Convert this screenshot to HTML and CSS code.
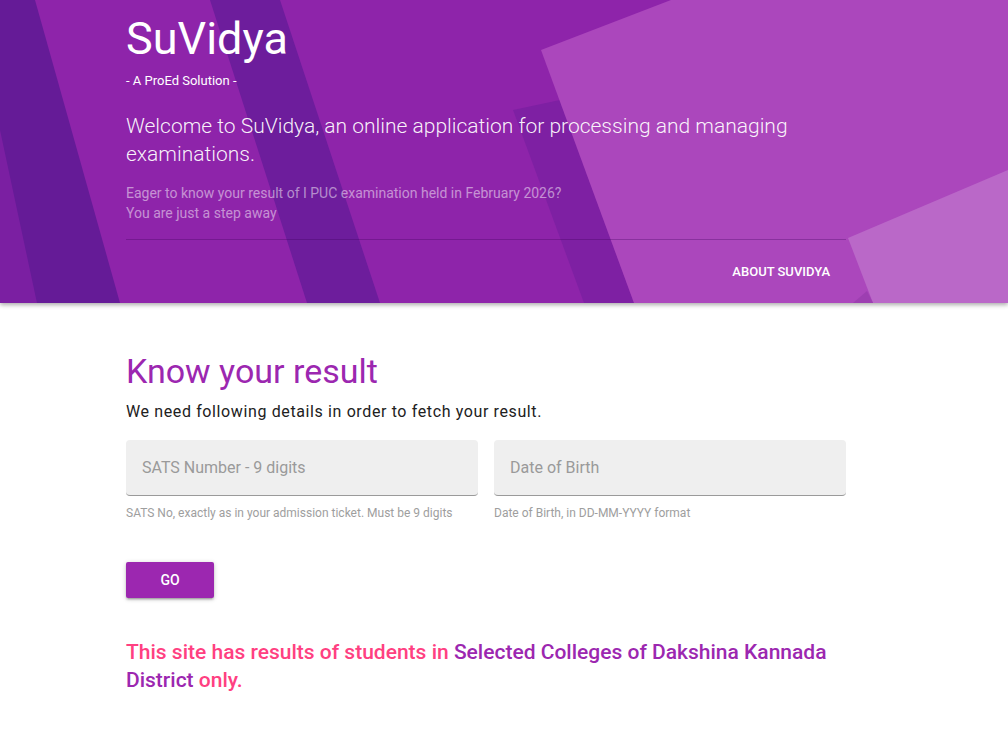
FILE: index.html
```html
<!DOCTYPE html>
<html lang="en">
<head>
<meta charset="utf-8">
<title>SuVidya - Know your result</title>
<link rel="stylesheet" href="styles.css">
</head>
<body>
<header class="hero">
  <svg class="hero-bg" viewBox="0 0 1008 303" preserveAspectRatio="none" aria-hidden="true">
    <rect width="1008" height="303" fill="#8e24aa"/>
    <polygon points="0,0 35,0 120,303 0,303" fill="#651b97"/>
    <polygon points="0,130 37,303 0,303" fill="#7b1fa2"/>
    <polygon points="210,0 280,0 380,303 307,303" fill="#6d1d9c"/>
    <polygon points="513,110 560,100 634,303 584,303" fill="#7e20a3"/>
    <polygon points="541,50 671,0 1008,0 1008,303 634,303" fill="#ab47bc"/>
    <polygon points="848,238 1008,170 1008,303 873,303" fill="#ba68c8"/>
    <polygon points="853,303 867,291 873,303" fill="#9d3fb1"/>
  </svg>
  <div class="hero-inner">
    <h1 class="brand">SuVidya</h1>
    <p class="tagline">- A ProEd Solution -</p>
    <p class="lead">Welcome to SuVidya, an online application for processing and managing examinations.</p>
    <p class="sub">Eager to know your result of I PUC examination held in February 2026?<br>You are just a step away</p>
    <nav class="hero-nav">
      <a class="nav-link" href="#">About SuVidya</a>
    </nav>
  </div>
</header>

<main class="content">
  <h2 class="title">Know your result</h2>
  <p class="intro">We need following details in order to fetch your result.</p>
  <form class="form">
    <div class="fields">
      <div class="field">
        <input class="input" type="text" placeholder="SATS Number - 9 digits">
        <div class="helper">SATS No, exactly as in your admission ticket. Must be 9 digits</div>
      </div>
      <div class="field">
        <input class="input" type="text" placeholder="Date of Birth">
        <div class="helper">Date of Birth, in DD-MM-YYYY format</div>
      </div>
    </div>
    <button class="btn" type="button">Go</button>
  </form>
  <p class="notice">This site has results of students in <strong class="hl">Selected Colleges of Dakshina Kannada District</strong> only.</p>
</main>
</body>
</html>
```

FILE: styles.css
```css
* { box-sizing: border-box; }

html, body {
  margin: 0;
  padding: 0;
  background: #ffffff;
  font-family: Roboto, "Noto Sans", "Liberation Sans", sans-serif;
  color: #212121;
}

.hero {
  position: relative;
  overflow: hidden;
  box-shadow: 0 2px 4px rgba(0, 0, 0, 0.25), 0 1px 6px rgba(0, 0, 0, 0.12);
}

.hero-bg {
  position: absolute;
  left: 0;
  top: 0;
  width: 100%;
  height: 100%;
  display: block;
}

.hero-inner {
  position: relative;
  margin-left: 126px;
  width: 720px;
  color: #ffffff;
}

.brand {
  margin: 0;
  padding-top: 11px;
  font-size: 45px;
  line-height: 56px;
  font-weight: 400;
}

.tagline {
  margin: 4px 0 0;
  font-size: 13px;
  line-height: 20px;
  font-weight: 400;
}

.lead {
  margin: 21px 0 0;
  font-size: 21px;
  line-height: 28px;
  font-weight: 300;
  color: rgba(255, 255, 255, 0.95);
}

.sub {
  margin: 15px 0 0;
  font-size: 14px;
  line-height: 20px;
  color: rgba(255, 255, 255, 0.5);
  padding-bottom: 16px;
  border-bottom: 1px solid rgba(60, 0, 90, 0.3);
}

.hero-nav {
  display: flex;
  justify-content: flex-end;
  align-items: center;
  height: 63px;
  padding-right: 16px;
}

.nav-link {
  color: #ffffff;
  text-decoration: none;
  text-transform: uppercase;
  font-size: 13px;
  font-weight: 500;
}

.content {
  margin-left: 126px;
  width: 720px;
  padding-bottom: 40px;
}

.title {
  margin: 47px 0 0;
  font-size: 34px;
  line-height: 42px;
  font-weight: 400;
  color: #9c27b0;
}

.intro {
  margin: 8px 0 0;
  font-size: 16px;
  line-height: 24px;
  letter-spacing: 0.62px;
  color: #212121;
}

.form {
  margin: 16px 0 0;
}

.fields {
  display: grid;
  grid-template-columns: 1fr 1fr;
  column-gap: 16px;
}

.input {
  display: block;
  width: 100%;
  height: 56px;
  padding: 0 16px;
  border: 0;
  border-bottom: 1px solid #9a9a9a;
  border-radius: 4px;
  background: #efefef;
  font-family: inherit;
  font-size: 16px;
  color: #212121;
  outline: none;
}

.input::placeholder {
  color: #9a9a9a;
}

.helper {
  margin-top: 9px;
  font-size: 12px;
  line-height: 16px;
  color: #9e9e9e;
}

.btn {
  display: block;
  margin-top: 41px;
  width: 88px;
  height: 36px;
  border: 0;
  border-radius: 2px;
  background: #9c27b0;
  color: #ffffff;
  font-family: inherit;
  font-size: 14px;
  font-weight: 500;
  text-transform: uppercase;
  box-shadow: 0 2px 2px 0 rgba(0, 0, 0, 0.14), 0 3px 1px -2px rgba(0, 0, 0, 0.12), 0 1px 5px 0 rgba(0, 0, 0, 0.2);
  cursor: pointer;
}

.notice {
  margin: 40px 0 0;
  font-size: 21px;
  line-height: 28px;
  font-weight: 500;
  color: #ff4081;
}

.hl {
  font-weight: 500;
  color: #9c27b0;
}
```
